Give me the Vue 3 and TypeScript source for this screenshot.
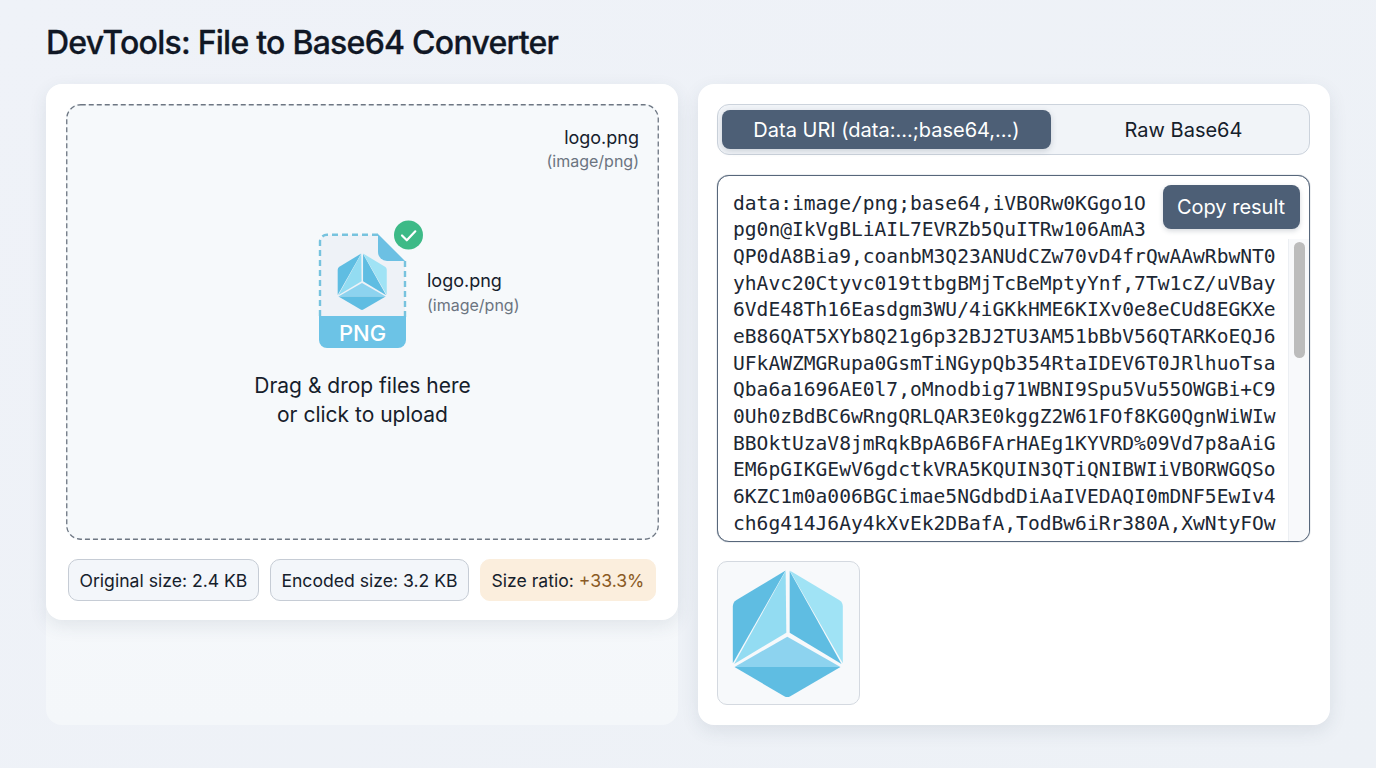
<script setup lang="ts">
const lines: string[] = [
  'data:image/png;base64,iVBORw0KGgo1O',
  'pg0n@IkVgBLiAIL7EVRZb5QuITRw106AmA3',
  'QP0dA8Bia9,coanbM3Q23ANUdCZw70vD4frQwAAwRbwNT0',
  'yhAvc20Ctyvc019ttbgBMjTcBeMptyYnf,7Tw1cZ/uVBay',
  '6VdE48Th16Easdgm3WU/4iGKkHME6KIXv0e8eCUd8EGKXe',
  'eB86QAT5XYb8Q21g6p32BJ2TU3AM51bBbV56QTARKoEQJ6',
  'UFkAWZMGRupa0GsmTiNGypQb354RtaIDEV6T0JRlhuoTsa',
  'Qba6a1696AE0l7,oMnodbig71WBNI9Spu5Vu55OWGBi+C9',
  '0Uh0zBdBC6wRngQRLQAR3E0kggZ2W61FOf8KG0QgnWiWIw',
  'BBOktUzaV8jmRqkBpA6B6FArHAEg1KYVRD%09Vd7p8aAiG',
  'EM6pGIKGEwV6gdctkVRA5KQUIN3QTiQNIBWIiVBORWGQSo',
  '6KZC1m0a006BGCimae5NGdbdDiAaIVEDAQI0mDNF5EwIv4',
  'ch6g414J6Ay4kXvEk2DBafA,TodBw6iRr380A,XwNtyFOw',
]

const facets: { d: string; fill: string }[] = [
  { d: 'M245 60L99 148Q88 155 88 168V336Z', fill: '#5fbde2' },
  { d: 'M245 62L92 338L247 245Z', fill: '#93dcf2' },
  { d: 'M257 62V245L411 338Z', fill: '#5fbde2' },
  { d: 'M257 60L404 148Q415 155 415 168V336Z', fill: '#a0e3f5' },
  { d: 'M93 347L250 257L408 347Z', fill: '#8dd3ef' },
  { d: 'M93 347H408L259 434Q250 439 241 434Z', fill: '#5fbde2' },
]
</script>

<template>
  <main class="page">
    <h1 class="title">DevTools: File to Base64 Converter</h1>
    <div class="columns">
      <section class="left-col">
        <div class="card upload-card">
          <div class="zone">
            <svg class="zone-border" width="593" height="436" aria-hidden="true">
              <rect x="0.75" y="0.75" width="591.5" height="434.5" rx="14" fill="none" stroke="#6d7682" stroke-width="1.3" stroke-dasharray="5 3" />
            </svg>
            <div class="file-top">
              <div class="file-name">logo.png</div>
              <div class="file-type">(image/png)</div>
            </div>
            <div class="file-row">
              <svg class="file-icon" width="106" height="130" viewBox="318 220 106 130" aria-hidden="true">
                <path d="M378 235.800H327a7 7 0 0 0-7 7V318h85V262" fill="#eef2f7" stroke="none" />
                <path d="M378 235.800H327a7 7 0 0 0-7 7V318M405 318V262" fill="none" stroke="#77c3de" stroke-width="2.400" stroke-dasharray="6 4" />
                <path d="M378 235l27 27h-18a9 9 0 0 1-9-9z" fill="#6cc0e3" />
                <path d="M319 317h87v24a8 8 0 0 1-8 8h-71a8 8 0 0 1-8-8z" fill="#6cc3e6" />
                <g transform="translate(362 283) scale(.15) translate(-250 -250)">
                  <path v-for="(f, i) in facets" :key="i" :d="f.d" :fill="f.fill" />
                </g>
                <text x="362.500" y="342" text-anchor="middle" class="png-label">PNG</text>
                <circle cx="408.500" cy="236" r="14.500" fill="#3dba87" />
                <path d="M402 236.500l4.800 4.800 8.500-9" fill="none" stroke="#fff" stroke-width="2.200" stroke-linecap="round" stroke-linejoin="round" />
              </svg>
              <div class="file-side">
                <div class="file-name">logo.png</div>
                <div class="file-type">(image/png)</div>
              </div>
            </div>
            <p class="hint">Drag &amp; drop files here<br />or click to upload</p>
          </div>
          <div class="stats">
            <span class="stat">Original size: 2.4 KB</span>
            <span class="stat">Encoded size: 3.2 KB</span>
            <span class="stat warn">Size ratio: <em>+33.3%</em></span>
          </div>
        </div>
      </section>

      <section class="card result-card">
        <div class="tabs">
          <button class="tab active">Data URI (data:...;base64,...)</button>
          <button class="tab raw">Raw Base64</button>
        </div>
        <div class="output">
          <div class="code">
            <div v-for="(line, i) in lines" :key="i" class="code-line">{{ line }}</div>
          </div>
          <button class="copy">Copy result</button>
          <div class="scrollbar"><div class="thumb"></div></div>
        </div>
        <div class="preview">
          <svg width="143" height="143" viewBox="41 32 425 425" aria-hidden="true">
            <path v-for="(f, i) in facets" :key="i" :d="f.d" :fill="f.fill" />
          </svg>
        </div>
      </section>
    </div>
  </main>
</template>

<style>
html, body { margin: 0; background: #eef2f7; }
</style>

<style scoped>
.page {
  box-sizing: border-box;
  width: 1376px;
  height: 768px;
  padding: 22px 46px 44px;
  background: linear-gradient(135deg, #eff2f8, #edf1f6);
  font-family: Inter, "Liberation Sans", sans-serif;
  color: #111827;
  overflow: hidden;
}
.title {
  margin: 0 0 20px;
  font-size: 32px;
  line-height: 42px;
  font-weight: 500;
  letter-spacing: -0.75px;
  -webkit-text-stroke: 0.3px #101725;
  color: #101725;
}
.columns {
  display: grid;
  grid-template-columns: 632px 632px;
  gap: 20px;
  height: 640px;
}
.left-col {
  border-radius: 16px;
  background: linear-gradient(180deg, #fafbfd, #f4f7fa);
}
.card {
  box-sizing: border-box;
  background: #fff;
  border-radius: 16px;
  box-shadow: 0 6px 18px rgba(51, 65, 85, 0.1);
  padding: 20px;
}
.upload-card {
  height: 536px;
}
.zone {
  position: relative;
  box-sizing: border-box;
  width: 593px;
  height: 436px;
  border-radius: 14px;
  background: #f6f9fb;
  padding: 22px 20px 0;
  display: flex;
  flex-direction: column;
}
.zone-border {
  position: absolute;
  left: 0;
  top: 0;
}
.file-name {
  font-size: 18px;
  line-height: 24px;
  color: #15202b;
}
.file-type {
  font-size: 16px;
  line-height: 22px;
  color: #6b7480;
}
.file-top {
  text-align: right;
}
.file-row {
  display: flex;
  margin-top: 47px;
  margin-left: 232px;
}
.file-icon {
  flex: none;
}
.file-side {
  margin: 50px 0 0 3px;
}
.file-side .file-type {
  margin-top: 1px;
}
.png-label {
  font-size: 22px;
  font-weight: 500;
  fill: #fff;
  font-family: Inter, "Liberation Sans", sans-serif;
}
.hint {
  margin: 22px 0 0;
  text-align: center;
  font-size: 21px;
  line-height: 29px;
  color: #15202b;
}
.stats {
  display: flex;
  gap: 11px;
  margin: 19px 0 0 2px;
}
.stat {
  box-sizing: border-box;
  height: 42px;
  padding: 0 10.500px;
  display: flex;
  align-items: center;
  white-space: pre;
  font-size: 17.600px;
  color: #15202b;
  background: #f3f6fa;
  border: 1px solid #c6ccd5;
  border-radius: 10px;
}
.stat.warn {
  background: #fbeedd;
  border-color: #fbeedd;
}
.stat em {
  font-style: normal;
  color: #8a5a24;
}
.result-card {
  display: flex;
  flex-direction: column;
  align-items: flex-start;
  padding: 20px 19px;
}
.tabs {
  box-sizing: border-box;
  width: 593px;
  height: 51px;
  display: grid;
  grid-template-columns: 329px 1fr;
  padding: 5px 4px;
  background: #f1f4f8;
  border: 1px solid #ccd3dc;
  border-radius: 12px;
}
.tab {
  border: none;
  background: transparent;
  font: inherit;
  font-size: 20px;
  color: #15202b;
  padding: 0;
  border-radius: 8px;
}
.tab.raw {
  padding-left: 11px;
}
.tab.active {
  background: #4d5f76;
  color: #fff;
  box-shadow: 0 2px 6px rgba(51, 65, 85, 0.2);
}
.output {
  position: relative;
  box-sizing: border-box;
  width: 593px;
  height: 367px;
  margin-top: 20px;
  border: 1px solid #57677b;
  border-radius: 12px;
  background: #fff;
  box-shadow: 0 0 1px #57677b;
  overflow: hidden;
}
.code {
  padding: 14.500px 0 0 15px;
  font-family: "DejaVu Sans Mono", "Liberation Mono", monospace;
  font-size: 19.600px;
  line-height: 26.670px;
  color: #1c2733;
  white-space: pre;
}
.copy {
  position: absolute;
  top: 9px;
  right: 9.500px;
  width: 137px;
  height: 44px;
  border: none;
  border-radius: 8px;
  background: #4d5f76;
  color: #fff;
  font: inherit;
  font-size: 20px;
  padding: 0;
  box-shadow: 0 2px 5px rgba(51, 65, 85, 0.2);
}
.scrollbar {
  position: absolute;
  right: 0;
  top: 63px;
  bottom: 0;
  width: 21px;
  box-sizing: border-box;
  padding: 3px 4px 0 5px;
  background: #f8f9fb;
  border-left: 1px solid #eceff3;
}
.thumb {
  height: 116px;
  border-radius: 6px;
  background: #bcbcbc;
}
.preview {
  box-sizing: border-box;
  width: 143px;
  height: 144px;
  margin-top: 19px;
  border: 1px solid #d4d9e0;
  border-radius: 10px;
  background: #f7f9fb;
  overflow: hidden;
}
.preview svg {
  display: block;
  margin: -1px 0 0 -1px;
}
</style>
